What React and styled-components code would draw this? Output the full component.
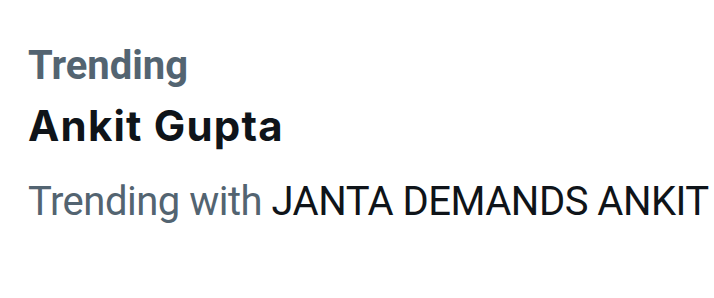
import React from 'react';
import styled, { createGlobalStyle } from 'styled-components';

const GlobalStyle = createGlobalStyle`
  body {
    margin: 0;
    background: #ffffff;
    font-family: Roboto, "Liberation Sans", sans-serif;
  }
`;

const Card = styled.div`
  width: 714px;
  height: 298px;
  box-sizing: border-box;
  padding: 44px 0 0 28px;
  display: flex;
  flex-direction: column;
  overflow: hidden;
`;

const Label = styled.div`
  font-size: 40px;
  font-weight: 700;
  color: #536471;
  line-height: 44px;
`;

const Title = styled.div`
  font-family: Inter, Roboto, sans-serif;
  font-size: 42px;
  font-weight: 700;
  color: #0f1419;
  line-height: 48px;
  letter-spacing: 1.2px;
  margin-top: 14px;
`;

const Meta = styled.div`
  font-size: 40px;
  font-weight: 400;
  color: #536471;
  line-height: 48px;
  margin-top: 28px;
  white-space: nowrap;
  letter-spacing: -0.5px;
`;

const Topic = styled.span`
  color: #0f1419;
`;

export default function App() {
  return (
    <>
      <GlobalStyle />
      <Card>
        <Label>Trending</Label>
        <Title>Ankit Gupta</Title>
        <Meta>
          Trending with <Topic>JANTA DEMANDS ANKIT</Topic>
        </Meta>
      </Card>
    </>
  );
}
